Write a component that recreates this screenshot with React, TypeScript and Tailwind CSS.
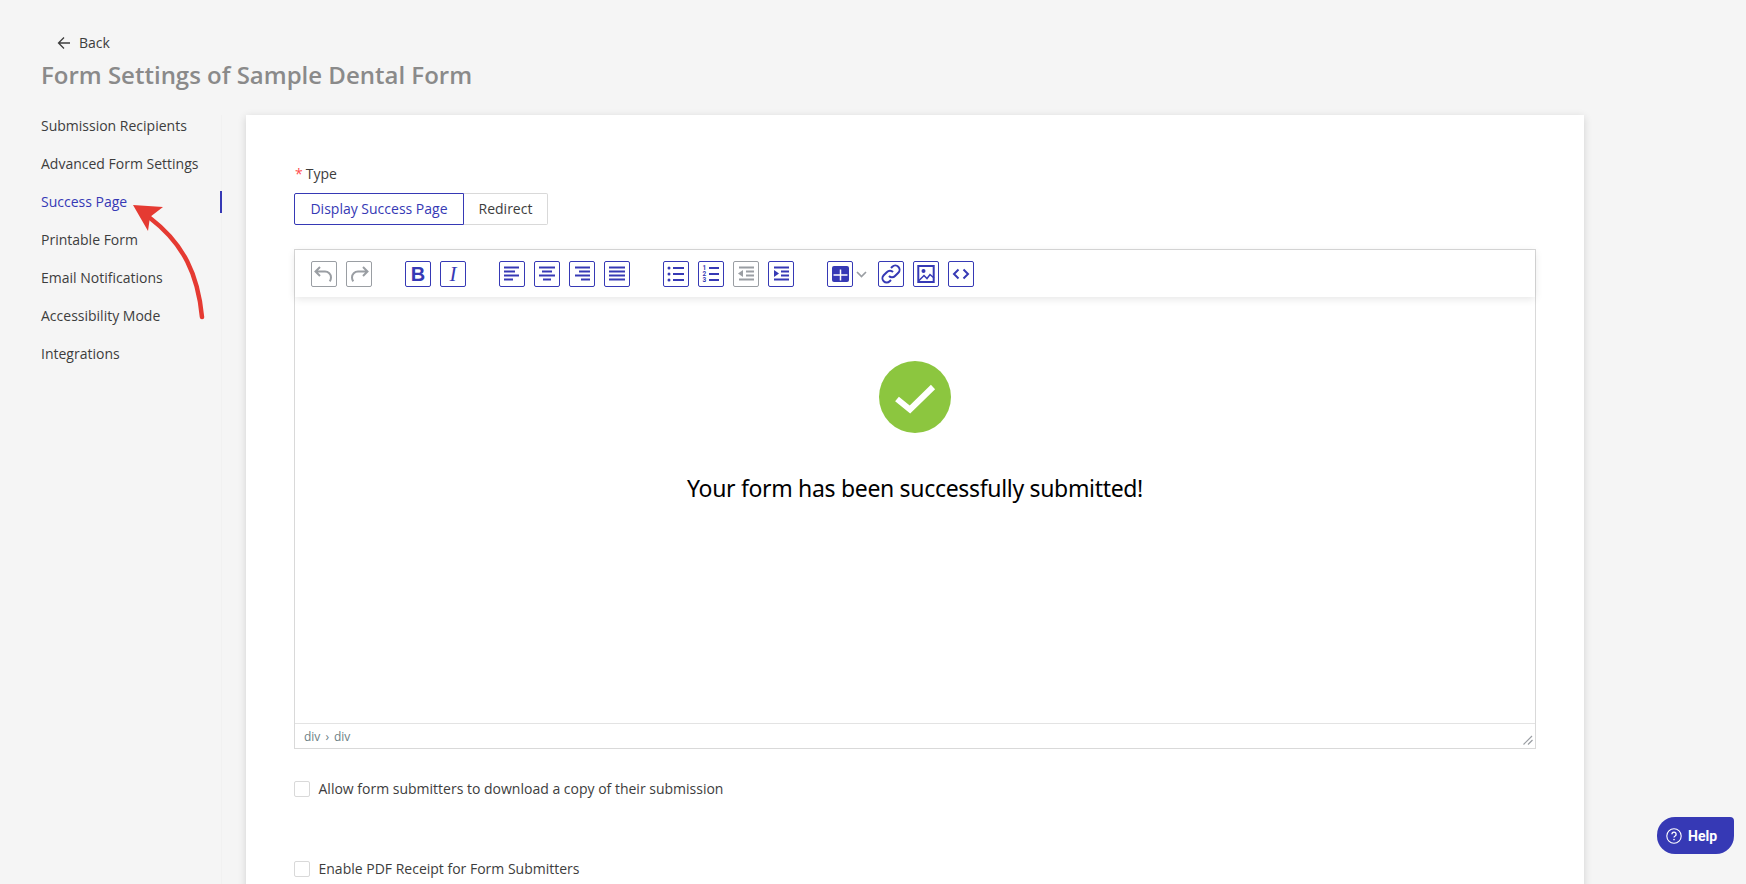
import React from "react";

const navItems = [
  "Submission Recipients",
  "Advanced Form Settings",
  "Success Page",
  "Printable Form",
  "Email Notifications",
  "Accessibility Mode",
  "Integrations",
];

const ToolButton = ({ disabled, children }: { disabled?: boolean; children: React.ReactNode }) => (
  <div
    className={
      "flex size-[26px] shrink-0 items-center justify-center rounded-[2px] border " +
      (disabled ? "border-[#9a9ea3] text-[#9a9ea3]" : "border-[#3639b5] text-[#3639b5]")
    }
  >
    {children}
  </div>
);

const Icon = ({ children }: { children: React.ReactNode }) => (
  <svg width="24" height="24" viewBox="0 0 24 24" fill="none" stroke="currentColor" strokeWidth="2">
    {children}
  </svg>
);

// y positions of the four lines in the align icons
const Lines = ({ rows }: { rows: [number, number][] }) => (
  <Icon>
    {rows.map(([a, b], i) => (
      <path key={i} d={`M${a} ${5.5 + i * 4}H${b}`} />
    ))}
  </Icon>
);

const App = () => {
  return (
    <div className="relative h-screen overflow-hidden bg-[#f5f5f5] font-['Open_Sans',sans-serif] text-sm text-[#3d3d3d]">
      <div className="pl-[41px] pt-[32px]">
        <div className="flex h-[22px] items-center pl-[16px]">
          <svg width="14" height="14" viewBox="0 0 14 14" fill="none" stroke="#3d3d3d" strokeWidth="1.3">
            <path d="M13 7H1.5M7 1.5L1.5 7L7 12.5" />
          </svg>
          <span className="ml-[8px]">Back</span>
        </div>
        <h1 className="mt-[3px] h-[35px] text-[24px] leading-[35px] font-semibold text-[#8a8a8a]">
          Form Settings of Sample Dental Form
        </h1>
      </div>

      <div className="mt-[23px] flex pl-[41px]">
        <nav className="flex h-[800px] w-[181px] shrink-0 flex-col gap-[16px] border-r border-[#f1f1f1]">
          {navItems.map((item) => (
            <div
              key={item}
              className={
                "h-[22px] leading-[22px] " +
                (item === "Success Page"
                  ? "mr-[-1px] border-r-2 border-[#3639b5] text-[#3639b5]"
                  : "")
              }
            >
              {item}
            </div>
          ))}
        </nav>

        <div className="ml-[24px] h-[800px] w-[1338px] shrink-0 bg-white px-[48px] pt-[48px] shadow-[0_2px_8px_rgba(0,0,0,0.15)]">
          <div className="h-[22px] pl-px leading-[22px]">
            <span className="mr-[3px] text-[#ff4d4f]">*</span>Type
          </div>
          <div className="mt-[8px] flex h-[32px]">
            <div className="flex w-[170px] items-center justify-center rounded-l-[2px] border border-[#3639b5] text-[#3639b5]">
              Display Success Page
            </div>
            <div className="flex w-[84px] items-center justify-center rounded-r-[2px] border border-l-0 border-[#d9d9d9]">
              Redirect
            </div>
          </div>

          <div className="mt-[24px] flex h-[500px] w-[1242px] flex-col border border-[#d9d9d9]">
            <div className="flex h-[47px] shrink-0 gap-[33px] pl-[16px] pt-[11px] shadow-[0_2px_8px_rgba(0,0,0,0.1)]">
              <div className="flex h-[26px] gap-[9px]">
                <ToolButton disabled>
                  <Icon>
                    <path d="M8 5L3.5 9.5L8 14M3.5 9.5H13a6 6 0 0 1 6 6c0 1.5-.5 2.8-1.3 3.8" />
                  </Icon>
                </ToolButton>
                <ToolButton disabled>
                  <Icon>
                    <path d="M16 5L20.5 9.5L16 14M20.5 9.5H11a6 6 0 0 0-6 6c0 1.5.5 2.8 1.3 3.8" />
                  </Icon>
                </ToolButton>
              </div>
              <div className="flex h-[26px] gap-[9px]">
                <ToolButton>
                  <span className="font-['Liberation_Sans',sans-serif] text-[20px] leading-none font-bold">B</span>
                </ToolButton>
                <ToolButton>
                  <span className="font-['Liberation_Serif',serif] text-[21px] leading-none italic">I</span>
                </ToolButton>
              </div>
              <div className="flex h-[26px] gap-[9px]">
                <ToolButton>
                  <Lines rows={[[4, 19], [4, 15], [4, 19], [4, 13]]} />
                </ToolButton>
                <ToolButton>
                  <Lines rows={[[4, 20], [7, 17], [4, 20], [8, 16]]} />
                </ToolButton>
                <ToolButton>
                  <Lines rows={[[5, 20], [9, 20], [5, 20], [11, 20]]} />
                </ToolButton>
                <ToolButton>
                  <Lines rows={[[4, 20], [4, 20], [4, 20], [4, 20]]} />
                </ToolButton>
              </div>
              <div className="flex h-[26px] gap-[9px]">
                <ToolButton>
                  <Icon>
                    <path d="M9 6H20M9 12H20M9 18H20" />
                    <circle cx="5" cy="6" r="1.5" fill="currentColor" stroke="none" />
                    <circle cx="5" cy="12" r="1.5" fill="currentColor" stroke="none" />
                    <circle cx="5" cy="18" r="1.5" fill="currentColor" stroke="none" />
                  </Icon>
                </ToolButton>
                <ToolButton>
                  <Icon>
                    <path d="M10 6H20M10 12H20M10 18H20" />
                    <g fill="currentColor" stroke="none" fontSize="6.5" fontWeight="700" fontFamily="Roboto, sans-serif">
                      <text x="3.5" y="8.2">1</text>
                      <text x="3.5" y="14.3">2</text>
                      <text x="3.5" y="20.4">3</text>
                    </g>
                  </Icon>
                </ToolButton>
                <ToolButton disabled>
                  <Icon>
                    <path d="M5 5.5H20M12 9.5H20M12 13.5H20M5 17.5H20" />
                    <path d="M9 8L4 11.5L9 15Z" fill="currentColor" stroke="none" />
                  </Icon>
                </ToolButton>
                <ToolButton>
                  <Icon>
                    <path d="M5 5.5H20M12 9.5H20M12 13.5H20M5 17.5H20" />
                    <path d="M5 8L10 11.5L5 15Z" fill="currentColor" stroke="none" />
                  </Icon>
                </ToolButton>
              </div>
              <div className="flex h-[26px] gap-[9px]">
                <div className="flex">
                  <ToolButton>
                    <svg width="17" height="16" viewBox="0 0 17 16">
                      <rect width="17" height="16" rx="2" fill="currentColor" />
                      <path d="M1.5 9H15.5M8.5 3.500V14.5" stroke="#fff" strokeWidth="1.5" />
                    </svg>
                  </ToolButton>
                  <div className="flex w-[16px] items-center justify-center">
                    <svg width="11" height="7" viewBox="0 0 11 7" fill="none" stroke="#9a9ea3" strokeWidth="1.7">
                      <path d="M1 1L5.5 5.5L10 1" />
                    </svg>
                  </div>
                </div>
                <ToolButton>
                  <Icon>
                    <path d="M10 14a4 4 0 0 0 6 0l3.300-3.300a4.200 4.200 0 0 0-6-6L12 6" />
                    <path d="M14 10a4 4 0 0 0-6 0l-3.300 3.300a4.200 4.200 0 0 0 6 6L12 18" />
                  </Icon>
                </ToolButton>
                <ToolButton>
                  <Icon>
                    <rect x="4.3" y="4" width="15.4" height="16" />
                    <circle cx="9.5" cy="9" r="2" fill="currentColor" stroke="none" />
                    <path d="M4.5 19L10 13.5L13 16.5L16 12.5L20 16" strokeWidth="1.5" />
                  </Icon>
                </ToolButton>
                <ToolButton>
                  <Icon>
                    <path d="M9.5 7.5L5 12L9.5 16.5M14.5 7.5L19 12L14.5 16.5" />
                  </Icon>
                </ToolButton>
              </div>
            </div>

            <div className="flex flex-1 flex-col items-center pt-[64px]">
              <div className="flex size-[72px] items-center justify-center rounded-full bg-[#8cc63f]">
                <svg width="72" height="72" viewBox="0 0 72 72" fill="none" stroke="#fff" strokeWidth="6">
                  <path d="M18 38L31 48.5L54 26" />
                </svg>
              </div>
              <p className="mt-[38px] font-['Noto_Sans',sans-serif] text-[23px] leading-[34px] tracking-[-0.32px] text-black">
                Your form has been successfully submitted!
              </p>
            </div>

            <div className="relative flex h-[25px] shrink-0 items-center border-t border-[#e3e3e3] pl-[9px] pt-[2px] text-xs text-[#6b8085]">
              div<span className="mx-[5px]">›</span>div
              <svg className="absolute right-[2px] bottom-[3px]" width="10" height="10" viewBox="0 0 10 10" stroke="#9a9ea3" strokeWidth="1.2">
                <path d="M0.5 9.5L9 1M5 9.5L9.5 5" />
              </svg>
            </div>
          </div>

          <label className="mt-[29px] flex h-[22px] items-center">
            <span className="size-[16px] rounded-[2px] border border-[#d9d9d9] bg-white" />
            <span className="ml-[8.5px]">Allow form submitters to download a copy of their submission</span>
          </label>
          <label className="mt-[58px] flex h-[22px] items-center">
            <span className="size-[16px] rounded-[2px] border border-[#d9d9d9] bg-white" />
            <span className="ml-[8.5px]">Enable PDF Receipt for Form Submitters</span>
          </label>
        </div>
      </div>

      {/* annotation arrow pointing at the active menu item */}
      <svg className="absolute top-0 left-0" width="260" height="340" viewBox="0 0 260 340" fill="none">
        <path d="M202 317C198 275 184 244 150 218" stroke="#e53a32" strokeWidth="4.5" strokeLinecap="round" />
        <path d="M133 205L163 207L150 217L148 231Z" fill="#e53a32" />
      </svg>

      <div className="absolute top-[817px] left-[1657px] flex h-[37px] w-[77px] items-center rounded-[18px] rounded-tr-[4px] bg-[#3639b5] pl-[9px] font-['Roboto',sans-serif] text-[14px] font-bold text-white">
        <svg width="16" height="16" viewBox="0 0 16 16" fill="none" stroke="#fff" strokeWidth="1.1">
          <circle cx="8" cy="8" r="7.2" />
          <path d="M5.9 6.2a2.1 2.1 0 1 1 3.2 1.8c-.7.4-1.1.8-1.1 1.6" strokeWidth="1.3" />
          <circle cx="8" cy="11.6" r=".8" fill="#fff" stroke="none" />
        </svg>
        <span className="ml-[6px]">Help</span>
      </div>
    </div>
  );
};

export default App;
